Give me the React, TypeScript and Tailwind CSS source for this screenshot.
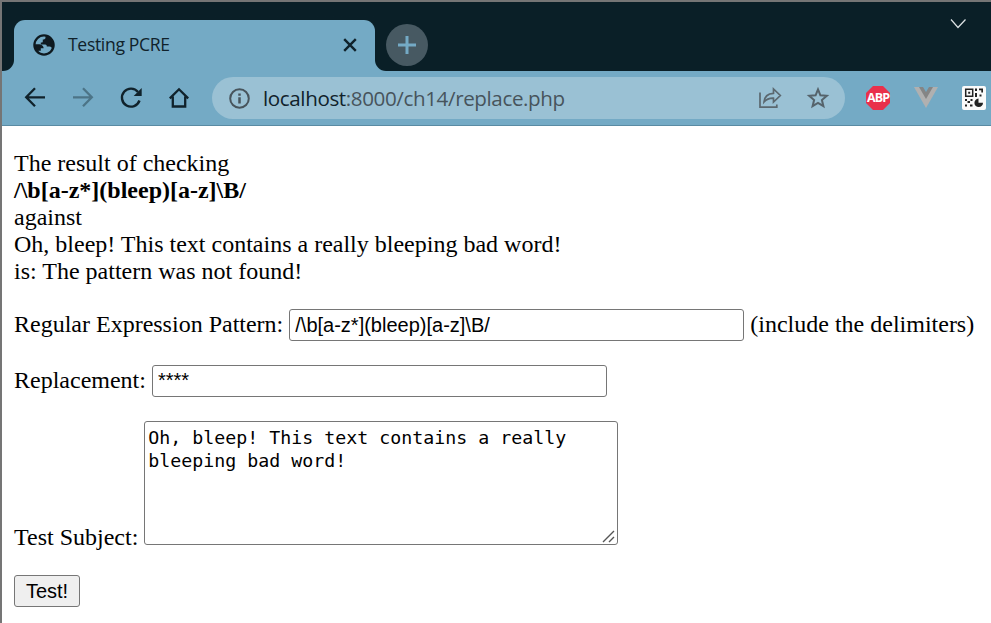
import React from 'react';

const ink = '#10222b';

function Globe() {
  return (
    <svg width="22" height="22" viewBox="0 0 22 22">
      <circle cx="11" cy="11" r="9.6" fill="none" stroke="#0f1a20" strokeWidth="2.3" />
      <path
        fill="#0f1a20"
        d="M12.5 1.5V3.6C12.5 5 11.5 5.6 9.8 5.6V7.4C9.8 8.3 9 8.6 7.8 8.6V10.4H12.2C13.4 10.4 13.8 11.2 13.8 12.4H16.5C18.2 12.4 18.8 13.6 19 15L20.8 11C20.8 5.5 17 2 12.5 1.5ZM1.5 10.2H5.5C8 10.2 10.6 11.4 10.6 14.2H7.8V16.8H5.5V18.6C3 17 1.5 14 1.5 10.2Z"
      />
    </svg>
  );
}

function TabStrip() {
  return (
    <div className="flex h-[69px] bg-[#74aac5]">
      <div className="w-3 shrink-0 rounded-br-[11px] bg-[#0a1f27]" />
      <div className="w-[361px] shrink-0 bg-linear-to-b from-[#0a1f27] from-50% to-[#74aac5] to-50% pt-[18px]">
        <div className="flex h-[51px] items-center rounded-t-[11px] bg-[#74aac5] pr-[18px] pb-[2px] pl-[19px]">
          <Globe />
          <span className="ml-[13px] flex-1 font-['Open_Sans',sans-serif] text-[17.6px] tracking-[-0.34px] whitespace-nowrap text-[#10222b]">
            Testing PCRE
          </span>
          <svg width="14" height="14" viewBox="0 0 14 14" stroke={ink} strokeWidth="2.4">
            <path d="M1.2 1.2 12.8 12.8M12.8 1.2 1.2 12.8" />
          </svg>
        </div>
      </div>
      <div className="flex flex-1 items-start justify-between rounded-bl-[11px] bg-[#0a1f27] pr-[24px] pl-[11px]">
        <div className="mt-[22px] flex size-[42px] items-center justify-center rounded-full bg-[#475962]">
          <svg width="18" height="18" viewBox="0 0 18 18" stroke="#74aac5" strokeWidth="3">
            <path d="M0 9H18M9 0V18" />
          </svg>
        </div>
        <svg className="mt-[16px]" width="17" height="11" viewBox="0 0 17 11" fill="none" stroke="#dde2e4" strokeWidth="1.2">
          <path d="M1 1.5 8 9.5 15.5 1.5" />
        </svg>
      </div>
    </div>
  );
}

function Toolbar() {
  return (
    <div className="flex h-[55px] items-center border-b border-[#5a8ba3] bg-[#74aac5] pl-[22px]">
      <svg width="22" height="22" viewBox="0 0 22 22" fill="none" stroke={ink} strokeWidth="2.3">
        <path d="M21 10.3H3M11 1.3 2.2 10.3 11 19.3" />
      </svg>
      <svg className="ml-[26px]" width="22" height="22" viewBox="0 0 22 22" fill="none" stroke="#4c7487" strokeWidth="2.3">
        <path d="M1 10.3H19M11 1.3 19.8 10.3 11 19.3" />
      </svg>
      <svg className="ml-[26px]" width="24" height="22" viewBox="0 0 24 22" fill="none" stroke={ink} strokeWidth="2.4">
        <path d="M19.5 13.5A9 9 0 1 1 18 5" />
        <path d="M21.7 1V9H13.7Z" fill={ink} stroke="none" />
      </svg>
      <svg className="ml-[25px]" width="20" height="22" viewBox="0 0 20 22" fill="none" stroke={ink} strokeWidth="2.3">
        <path d="M.8 11.4 10 2.3 19.2 11.4M3.8 9.5V19.5H16.2V9.5" />
      </svg>
      <div className="ml-[23px] flex h-[42px] w-[633px] items-center rounded-full bg-[#9ac1d4] pl-[17px]">
        <svg width="21" height="21" viewBox="0 0 21 21" fill="none" stroke="#47545c" strokeWidth="2">
          <circle cx="10.5" cy="10.5" r="9.3" />
          <path d="M10.5 9.2V15.5M10.5 5.5V7.7" strokeWidth="2.5" />
        </svg>
        <span className="ml-[13px] pt-px font-['Open_Sans',sans-serif] text-[20.6px] tracking-[-0.39px] whitespace-nowrap text-[#47545c]">
          <span className="text-[#10222b]">localhost</span>:8000/ch14/replace.php
        </span>
        <svg className="ml-auto" width="24" height="22" viewBox="0 0 24 22" fill="none" stroke="#5b686f" strokeWidth="1.7">
          <path d="M2 5.5V20.2H18.8V17.5M6 15C6.5 9.5 10 6.5 15.5 6.3V2L22.3 8.5 15.5 15V11.2C11.2 11 8.5 12.2 6 15Z" />
        </svg>
        <svg className="mr-[15px] ml-[24px]" width="24" height="22" viewBox="0 0 24 22" fill="none" stroke="#55636b" strokeWidth="2">
          <path d="M12 2.4 14.4 8.3 20.8 8.8 15.9 13 17.4 19.2 12 15.9 6.6 19.2 8.1 13 3.2 8.8 9.6 8.3Z" />
        </svg>
      </div>
      <div className="ml-[20px] grid size-[26px] place-items-center">
        <svg className="col-start-1 row-start-1" width="26" height="26" viewBox="0 0 26 26">
          <path d="M8 1H18L25 8V18L18 25H8L1 18V8Z" fill="#e9304b" />
        </svg>
        <span className="relative col-start-1 row-start-1 font-['Open_Sans',sans-serif] text-[12.5px] leading-[18px] font-bold tracking-[-0.9px] text-white">
          ABP
        </span>
      </div>
      <svg className="ml-[23px]" width="24" height="22" viewBox="0 0 24 22">
        <path d="M0 0H24L12 21Z" fill="#b0b0b0" />
        <path d="M5 0H19L12 12Z" fill="#858585" />
        <path d="M9 0H15L12 5Z" fill="#74aac5" />
      </svg>
      <svg className="ml-[24px]" width="24" height="24" viewBox="0 0 24 24">
        <rect width="24" height="24" rx="2" fill="#fafafa" />
        <path d="M3.7 3.2H10.7V10.2H3.7Z" fill="none" stroke="#222" strokeWidth="1.5" />
        <path d="M6.2 5.7H8.2V7.7H6.2ZM13 2.5H15V5H13ZM13 7H15V11H13ZM17 2.5H21V6.5H19.3V4.2H17ZM17.5 8.5H19.5V10.5H17.5ZM3 13H5V15H3ZM8.5 13H10.5V15H8.5ZM5.5 15H8V17H5.5ZM3 18.5H5V20.5H3ZM8 18.5H10.5V20.5H8Z" fill="#222" />
        <path d="M16.5 12.5V16.7H21A4.3 4.3 0 1 1 16.5 12.5Z" fill="#222" />
      </svg>
    </div>
  );
}

export default function App() {
  return (
    <div className="h-[623px] w-[991px] overflow-hidden border-t-2 border-l-2 border-[#757575] bg-white font-['Liberation_Serif',serif] text-[24px] leading-[27px] text-black">
      <TabStrip />
      <Toolbar />
      <main className="pt-[24px] pl-3">
        <p>
          The result of checking
          <br />
          <b>/\b[a-z*](bleep)[a-z]\B/</b>
          <br />
          against
          <br />
          Oh, bleep! This text contains a really bleeping bad word!
          <br />
          is: The pattern was not found!
        </p>
        <form className="mt-6">
          <label className="flex h-8 items-center whitespace-nowrap">
            <span className="pb-[2px]">Regular Expression Pattern:</span>
            <input
              className="mx-[6px] h-8 w-[455px] rounded-[3px] border border-[#767676] px-[5px] font-['Liberation_Sans',sans-serif] text-[20px]"
              defaultValue="/\b[a-z*](bleep)[a-z]\B/"
            />
            <span className="pb-[2px]">(include the delimiters)</span>
          </label>
          <label className="mt-6 flex h-8 items-center">
            <span className="pb-[2px]">Replacement:</span>
            <input
              className="ml-[6px] h-8 w-[455px] rounded-[3px] border border-[#767676] px-[5px] pb-[2px] font-['Liberation_Sans',sans-serif] text-[20px]"
              defaultValue="****"
            />
          </label>
          <label className="mt-6 flex items-end">
            <span className="-mb-[6px]">Test Subject:</span>
            <span className="relative ml-[6px] block h-[124px] w-[474px]">
              <textarea
                className="block size-full resize-none rounded-[3px] border border-[#767676] px-[3px] py-1 font-['DejaVu_Sans_Mono',monospace] text-[18.27px] leading-[23px]"
                defaultValue="Oh, bleep! This text contains a really bleeping bad word!"
              />
              <svg className="absolute right-[3px] bottom-[2px]" width="13" height="13" viewBox="0 0 13 13" stroke="#555" strokeWidth="1.4">
                <path d="M1 12 12 1M7 12 12 7" />
              </svg>
            </span>
          </label>
          <button
            type="button"
            className="mt-[30px] block h-8 w-[66px] rounded-[3px] border border-[#767676] bg-[#efefef] font-['Liberation_Sans',sans-serif] text-[20px]"
          >
            Test!
          </button>
        </form>
      </main>
    </div>
  );
}
